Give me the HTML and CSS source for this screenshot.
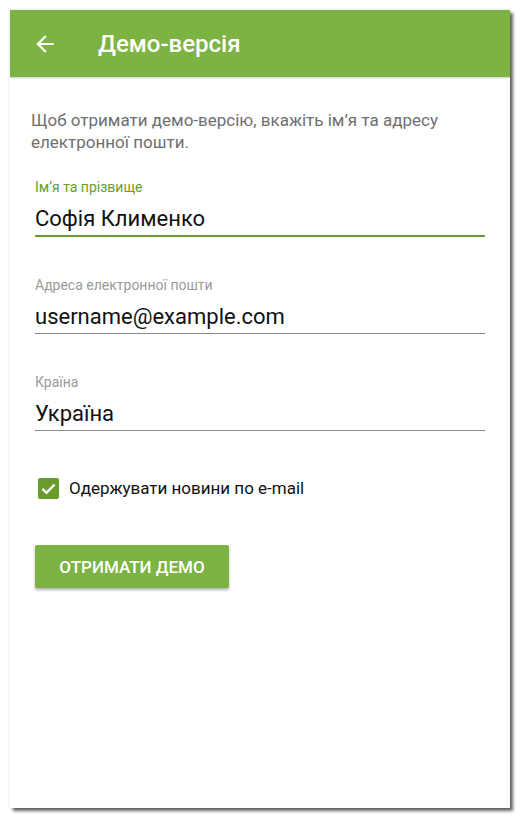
FILE: index.html
```html
<!DOCTYPE html>
<html lang="uk">
<head>
<meta charset="utf-8">
<link rel="stylesheet" href="styles.css">
</head>
<body>
<div class="phone">
  <header class="appbar">
    <svg class="back" width="24" height="24" viewBox="0 0 24 24"><path d="M20 11H7.83l5.59-5.59L12 4l-8 8 8 8 1.41-1.41L7.83 13H20v-2z" fill="#fff"/></svg>
    <h1 class="title">Демо-версія</h1>
  </header>
  <main class="content">
    <p class="intro">Щоб отримати демо-версію, вкажіть ім’я та адресу електронної пошти.</p>
    <div class="field focused">
      <div class="label">Ім’я та прізвище</div>
      <div class="value">Софія Клименко</div>
    </div>
    <div class="field">
      <div class="label">Адреса електронної пошти</div>
      <div class="value">username@example.com</div>
    </div>
    <div class="field">
      <div class="label">Країна</div>
      <div class="value">Україна</div>
    </div>
    <label class="check">
      <span class="box"><svg width="21" height="21" viewBox="0 0 21 21"><path d="M4.5 10.8l4 4 8-8.3" fill="none" stroke="#fff" stroke-width="2.4"/></svg></span>
      <span class="check-text">Одержувати новини по e-mail</span>
    </label>
    <button class="btn">ОТРИМАТИ ДЕМО</button>
  </main>
</div>
</body>
</html>
```

FILE: styles.css
```css
* { box-sizing: border-box; }
html, body { margin: 0; padding: 0; background: #fff; }
body { font-family: Roboto, "Noto Sans", sans-serif; }
.phone {
  margin: 10px;
  width: 500px;
  height: 798px;
  background: #fff;
  box-shadow: 3px 3px 3px rgba(0,0,0,0.6), 0 0 3px rgba(0,0,0,0.15);
  overflow: hidden;
}
.appbar {
  height: 67px;
  background: #7cb342;
  display: flex;
  align-items: center;
  padding-left: 22px;
  box-shadow: 0 1px 2px rgba(0,0,0,0.2);
  position: relative;
}
.back { width: 26px; height: 26px; }
.title {
  margin: 0 0 0 40px;
  color: #fff;
  font-size: 24px;
  font-weight: 500;
}
.content { padding: 32px 25px 0 21px; }
.intro {
  margin: 0;
  font-size: 17px;
  line-height: 22px;
  color: #6f6f6f;
}
.field { margin-left: 4px; margin-top: 40px; }
.field.focused { margin-top: 26px; }
.label {
  font-size: 14px;
  line-height: 16px;
  color: #9a9a9a;
}
.value {
  margin-top: 11px;
  font-size: 22px;
  line-height: 26px;
  color: #111;
  padding-bottom: 3px;
  border-bottom: 1px solid #8a8a8a;
}
.focused .label { color: #6a9c2d; }
.focused .value { border-bottom: 2px solid #6a9c2d; }
.check {
  display: flex;
  align-items: center;
  margin: 47px 0 0 7px;
  height: 20px;
}
.box {
  width: 21px; height: 21px;
  background: #6a9c2d;
  border-radius: 2px;
  display: flex; align-items: center; justify-content: center;
}
.check-text {
  margin-left: 10px;
  font-size: 17px;
  line-height: 20px;
  color: #111;
}
.btn {
  display: block;
  margin: 47px 0 0 4px;
  width: 194px;
  height: 43px;
  border: 0;
  border-radius: 2px;
  background: #7cb342;
  color: #fff;
  font-family: Roboto, sans-serif;
  font-size: 17px;
  font-weight: 500;
  box-shadow: 0 2px 3px rgba(0,0,0,0.3);
}
```
